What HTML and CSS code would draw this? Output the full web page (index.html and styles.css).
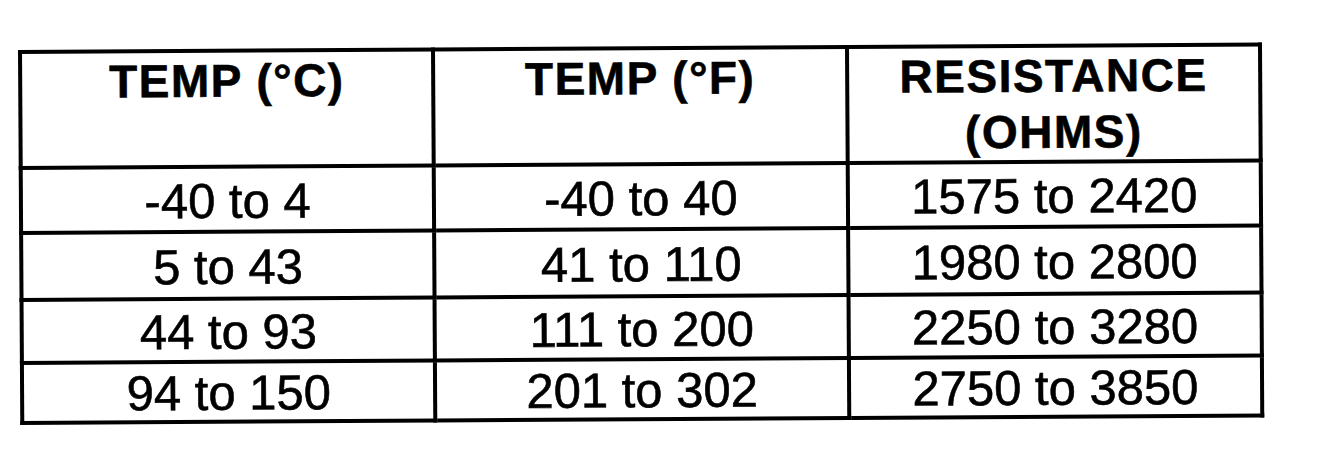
FILE: index.html
```html
<!DOCTYPE html>
<html lang="en">

<head>
  <meta charset="UTF-8">
  <meta name="viewport" content="width=device-width, initial-scale=1.0">
  <title>Sensor resistance table</title>

  <link rel="stylesheet" href="styles.css">
</head>

<body>
  <div class="sheet">
    <table class="spec">
      <thead>
        <tr>
          <th>TEMP (°C)</th>
          <th>TEMP (°F)</th>
          <th>RESISTANCE<br>(OHMS)</th>
        </tr>
      </thead>
      <tbody>
        <tr class="r1">
          <td>-40 to 4</td>
          <td>-40 to 40</td>
          <td>1575 to 2420</td>
        </tr>
        <tr class="r2">
          <td>5 to 43</td>
          <td>41 to 110</td>
          <td>1980 to 2800</td>
        </tr>
        <tr class="r3">
          <td>44 to 93</td>
          <td>111 to 200</td>
          <td>2250 to 3280</td>
        </tr>
        <tr class="r4">
          <td>94 to 150</td>
          <td>201 to 302</td>
          <td>2750 to 3850</td>
        </tr>
      </tbody>
    </table>
  </div>
</body>

</html>
```

FILE: styles.css
```css
* {
  margin: 0;
  padding: 0;
}

body {
  background: #fff;
  color: #000;
  font-family: "Liberation Sans", Arial, sans-serif;
}

.sheet {
  padding: 50px 0 0 18px;
}

/* scanned table is a little tilted */
.spec {
  width: 1244px;
  border-collapse: collapse;
  border: 4px solid #000;
  table-layout: fixed;
  transform: rotate(-0.35deg);
  transform-origin: left top;
}

.spec th,
.spec td {
  border: 4px solid #000;
  text-align: center;
  -webkit-text-stroke: 0.6px #000;
}

.spec th {
  height: 110px;
  vertical-align: top;
  font-size: 46px;
  font-weight: bold;
  line-height: 56px;
  letter-spacing: 1.5px;
}

.spec td {
  font-size: 49px;
  line-height: 1;
  vertical-align: middle;
  padding-top: 3px;
}

.r1 td { height: 58px; }
.r2 td { height: 60px; }
.r3 td { height: 56px; }
.r4 td { height: 53px; }
```
